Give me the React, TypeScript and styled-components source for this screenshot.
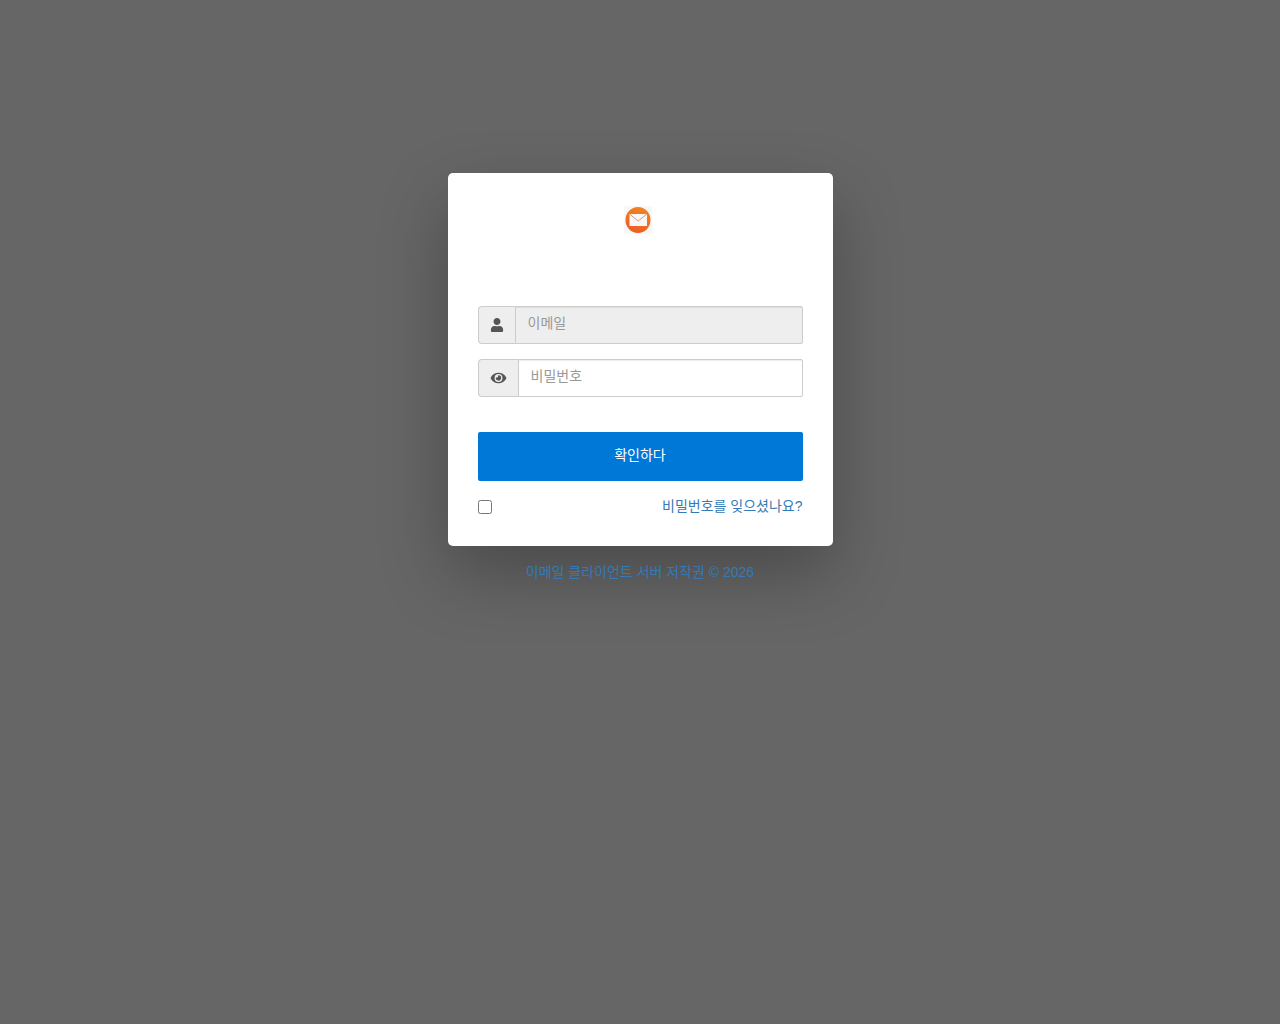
import React from "react";
import styled, { createGlobalStyle } from "styled-components";

const GlobalStyle = createGlobalStyle`
  * { box-sizing: border-box; }
  body {
    margin: 0;
    background: #666;
    color: #555;
    font: 14px/20px "Liberation Sans", "Noto Sans CJK KR", sans-serif;
  }
  a { color: #337ab7; text-decoration: none; }
  button, input { font: inherit; }
`;

const Page = styled.main`
  display: flex;
  flex-direction: column;
  align-items: center;
  min-height: 100vh;
  padding: 173px 16px 32px;
`;

const Card = styled.form`
  width: 100%;
  max-width: 385px;
  padding: 30px;
  background: #fff;
  border-radius: 5px;
  box-shadow: 0 28px 68px rgba(0, 0, 0, 0.28);
`;

const Brand = styled.div`
  display: flex;
  justify-content: center;
  height: 103px;
  padding: 3px 5px 0 0;
`;

const Field = styled.div`
  display: flex;
  height: 38px;
  margin-bottom: 15px;
`;

const Addon = styled.label`
  display: flex;
  align-items: center;
  padding: 0 11px;
  background: #eee;
  border: 1px solid #ccc;
  border-right: 0;
  border-radius: 4px 0 0 4px;
`;

const TextInput = styled.input`
  flex: 1;
  min-width: 0;
  padding: 0 12px 4px;
  border: 1px solid #ccc;
  border-radius: 0 2px 2px 0;
  background: ${(p) => (p.readOnly ? "#eee" : "#fff")};
  box-shadow: inset 0 1px 1px rgba(0, 0, 0, 0.075);
  color: #555;
  outline: 0;
  &::placeholder { color: #999; opacity: 1; }
`;

const Submit = styled.button`
  display: block;
  width: 100%;
  height: 49px;
  margin-top: 35px;
  padding: 0 0 4px;
  border: 0;
  border-radius: 2px;
  background: #0078d7;
  color: #fff;
  cursor: pointer;
`;

const Options = styled.div`
  display: flex;
  justify-content: space-between;
  align-items: center;
  margin-top: 15px;
  height: 20px;
`;

const RememberLabel = styled.label`
  display: flex;
`;

const Remember = styled.input`
  width: 14px;
  height: 14px;
  margin: 2px 0 0;
`;

const Footer = styled.footer`
  margin-top: 16px;
`;

const Logo = () => (
  <svg width="28" height="28" viewBox="0 0 28 28" aria-hidden="true">
    <defs>
      <linearGradient id="disc" x1="0.7" y1="0" x2="0.3" y2="1">
        <stop offset="0" stopColor="#f08520" />
        <stop offset="1" stopColor="#ec5c26" />
      </linearGradient>
    </defs>
    <rect width="28" height="28" fill="#f7f7f7" />
    <ellipse cx="14" cy="14" rx="12.5" ry="13" fill="url(#disc)" />
    <rect x="5.5" y="8" width="17.5" height="12" fill="#f7f7f7" />
    <path d="M5.5 8l8.7 7L23 8" fill="none" stroke="#e8875c" strokeWidth="0.9" />
  </svg>
);

const UserIcon = () => (
  <svg width="14" height="14" viewBox="0 0 512 512" fill="#555" aria-hidden="true">
    <path d="M256 256c70.700 0 128-57.300 128-128S326.700 0 256 0 128 57.300 128 128s57.300 128 128 128zm89.600 32h-16.700c-22.200 10.200-46.900 16-72.900 16s-50.600-5.800-72.900-16h-16.700C92.200 288 32 348.200 32 422.400V464c0 26.500 21.500 48 48 48h352c26.500 0 48-21.500 48-48v-41.600c0-74.200-60.200-134.400-134.400-134.400z" />
  </svg>
);

const EyeIcon = () => (
  <svg width="17" height="14" viewBox="0 0 576 512" fill="#555" aria-hidden="true">
    <path d="M572.520 241.400C518.290 135.590 410.930 64 288 64S57.680 135.640 3.480 241.410a32.350 32.350 0 0 0 0 29.190C57.710 376.410 165.070 448 288 448s230.320-71.640 284.520-177.410a32.350 32.350 0 0 0 0-29.190zM288 400a144 144 0 1 1 144-144 143.930 143.930 0 0 1-144 144zm0-240a95.310 95.310 0 0 0-25.310 3.790 47.850 47.850 0 0 1-66.900 66.900A95.780 95.780 0 1 0 288 160z" />
  </svg>
);

export default function App() {
  return (
    <>
      <GlobalStyle />
      <Page>
        <Card onSubmit={(e) => e.preventDefault()}>
          <Brand>
            <Logo />
          </Brand>
          <Field>
            <Addon htmlFor="email">
              <UserIcon />
            </Addon>
            <TextInput id="email" type="email" placeholder="이메일" readOnly />
          </Field>
          <Field>
            <Addon htmlFor="password">
              <EyeIcon />
            </Addon>
            <TextInput id="password" type="password" placeholder="비밀번호" />
          </Field>
          <Submit type="submit">확인하다</Submit>
          <Options>
            <RememberLabel htmlFor="remember">
              <Remember id="remember" type="checkbox" />
            </RememberLabel>
            <a href="#reset">비밀번호를 잊으셨나요?</a>
          </Options>
        </Card>
        <Footer>
          <a href="#home">이메일 클라이언트 서버 저작권 © 2026</a>
        </Footer>
      </Page>
    </>
  );
}
